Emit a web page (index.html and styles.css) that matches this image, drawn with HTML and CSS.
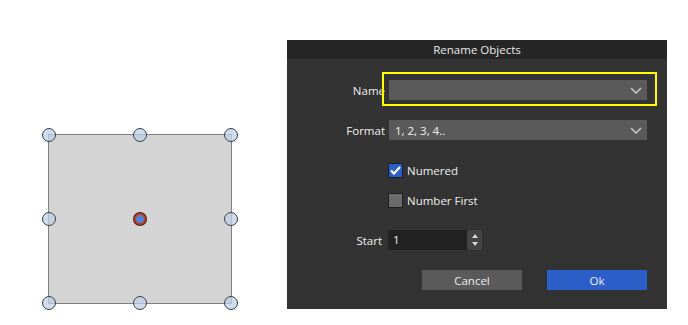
FILE: index.html
```html
<!DOCTYPE html>
<html>
<head>
  <title>Rename Objects</title>
  <link rel="stylesheet" href="styles.css">
</head>
<body>

<div class="page">
  <div class="canvas">
    <div class="shape">
      <span class="handle h-tl"></span>
      <span class="handle h-tm"></span>
      <span class="handle h-tr"></span>
      <span class="handle h-ml"></span>
      <span class="handle h-mr"></span>
      <span class="handle h-bl"></span>
      <span class="handle h-bm"></span>
      <span class="handle h-br"></span>
      <span class="pivot"></span>
    </div>
  </div>

  <div class="dialog">
    <div class="title">Rename Objects</div>
    <div class="body">
      <div class="row">
        <label class="label">Name</label>
        <div class="field select">
          <span class="value"></span>
          <svg class="chevron" width="12" height="7" viewBox="0 0 12 7"><path d="M1 1 L6 6 L11 1" fill="none" stroke="#c4c4c4" stroke-width="1.6"/></svg>
          <div class="highlight"></div>
        </div>
      </div>

      <div class="row gap">
        <label class="label">Format</label>
        <div class="field select">
          <span class="value">1, 2, 3, 4..</span>
          <svg class="chevron" width="12" height="7" viewBox="0 0 12 7"><path d="M1 1 L6 6 L11 1" fill="none" stroke="#c4c4c4" stroke-width="1.6"/></svg>
        </div>
      </div>

      <div class="row gap">
        <span></span>
        <div class="check">
          <span class="box checked">
            <svg width="11" height="9" viewBox="0 0 11 9"><path d="M1 4.5 L4 7.5 L10 1" fill="none" stroke="#fff" stroke-width="2.2"/></svg>
          </span>
          Numered
        </div>
      </div>

      <div class="row small-gap">
        <span></span>
        <div class="check">
          <span class="box"></span>
          Number First
        </div>
      </div>

      <div class="row gap">
        <label class="label start-label">Start</label>
        <div class="spin">
          <div class="num">1</div>
          <div class="arrows">
            <svg width="8" height="16" viewBox="0 0 8 16"><path d="M4 2 L7 6 L1 6 Z M1 10 L7 10 L4 14 Z" fill="#d8d8d8"/></svg>
          </div>
        </div>
      </div>

      <div class="buttons">
        <button class="btn">Cancel</button>
        <button class="btn primary">Ok</button>
      </div>
    </div>
  </div>
</div>

</body>
</html>
```

FILE: styles.css
```css
body {
  margin: 0;
  background: #fff;
  font-family: 'Open Sans', 'Noto Sans', sans-serif;
  font-size: 11.5px;
}

.page {
  display: flex;
  align-items: flex-start;
}

/* canvas with the selected square */
.canvas {
  width: 287px;
  height: 325px;
}

.shape {
  position: relative;
  margin: 134px 0 0 48px;
  width: 184px;
  height: 170px;
  background: #d4d4d4;
  border: 1px solid #7e7e7e;
  box-sizing: border-box;
}

.handle {
  position: absolute;
  width: 14px;
  height: 14px;
  margin: -7px 0 0 -7px;
  border-radius: 50%;
  border: 1px solid #3a3f48;
  background: rgba(190, 208, 230, 0.75);
  box-sizing: border-box;
}

.h-tl { left: 0; top: 0; }
.h-tm { left: 50%; top: 0; }
.h-tr { left: 100%; top: 0; }
.h-ml { left: 0; top: 50%; }
.h-mr { left: 100%; top: 50%; }
.h-bl { left: 0; top: 100%; }
.h-bm { left: 50%; top: 100%; }
.h-br { left: 100%; top: 100%; }

.pivot {
  position: absolute;
  left: 50%;
  top: 50%;
  width: 12px;
  height: 12px;
  margin: -6px 0 0 -6px;
  border-radius: 50%;
  background: #4f86d8;
  border: 2px solid #c8391e;
  box-shadow: 0 0 0 1px #3a2520;
  box-sizing: border-box;
}

/* dialog */
.dialog {
  margin-top: 40px;
  width: 380px;
  background: #333;
  color: #f0f0f0;
}

.title {
  height: 19px;
  line-height: 19px;
  background: #262626;
  text-align: center;
  color: #ececec;
}

.body {
  padding: 21px 20px 19px 0;
}

.row {
  display: grid;
  grid-template-columns: 98px 1fr;
  column-gap: 4px;
  align-items: center;
  height: 20px;
}

.row.gap { margin-top: 20px; }
.row.small-gap { margin-top: 10px; }

.label {
  text-align: right;
}

.start-label {
  margin-right: 3px;
}

.field {
  position: relative;
  height: 20px;
  background: #5a5a5a;
  display: flex;
  align-items: center;
  padding: 0 5px 0 6px;
}

.value {
  flex: 1;
}

.highlight {
  position: absolute;
  left: -7px;
  top: -8px;
  width: 271px;
  height: 30px;
  border: 2px solid #ffff00;
}

.check {
  display: flex;
  align-items: center;
  gap: 4px;
  margin-left: -1px;
}

.box {
  width: 15px;
  height: 15px;
  box-sizing: border-box;
  background: #6b6b6b;
  border: 1px solid #1f1f1f;
  display: flex;
  align-items: center;
  justify-content: center;
}

.box.checked {
  background: #2c5ec8;
}

.spin {
  display: flex;
  margin-left: -1px;
}

.num {
  width: 74px;
  height: 20px;
  line-height: 20px;
  padding-left: 5px;
  background: #222;
}

.arrows {
  width: 15px;
  height: 20px;
  background: #444;
  border-radius: 3px;
  display: flex;
  align-items: center;
  justify-content: center;
}

.buttons {
  display: flex;
  justify-content: flex-end;
  gap: 25px;
  margin-top: 20px;
}

.btn {
  width: 100px;
  height: 20px;
  padding: 0;
  border: none;
  background: #5a5a5a;
  color: #f0f0f0;
  font-family: inherit;
  font-size: inherit;
}

.btn.primary {
  background: #2c5ec8;
}
```
